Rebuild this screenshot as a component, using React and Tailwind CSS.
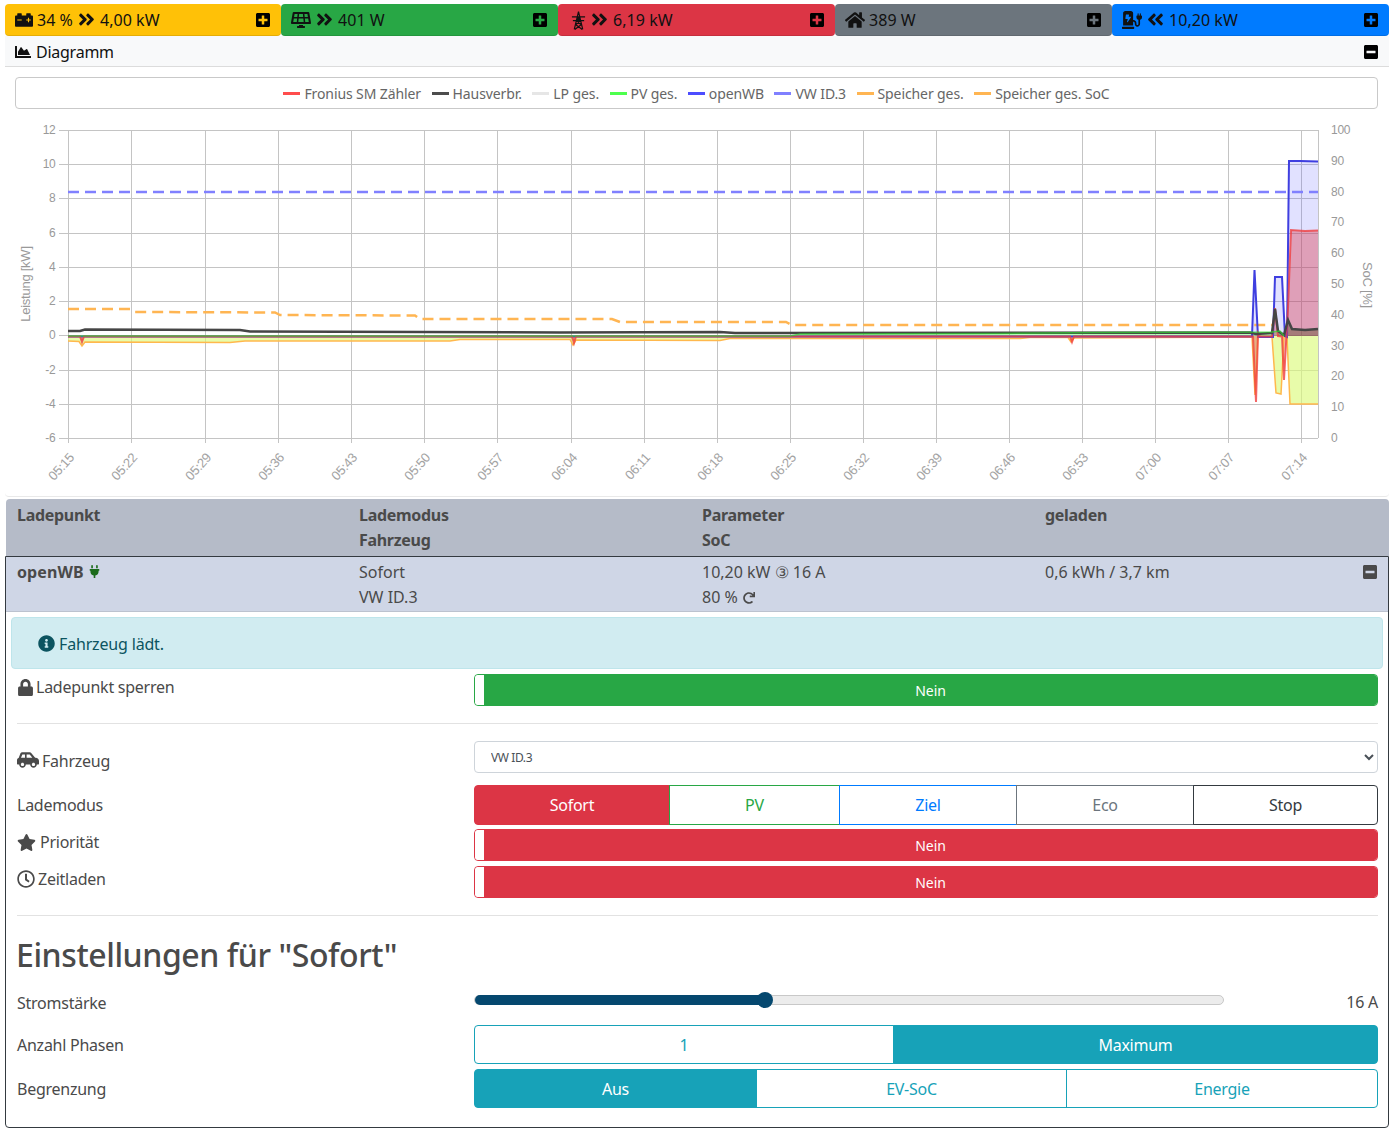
import {
  FaCarBattery, FaAngleDoubleRight, FaAngleDoubleLeft, FaSolarPanel, FaHome, FaChargingStation,
  FaPlusSquare, FaMinusSquare, FaChartArea, FaPlug, FaInfoCircle, FaLock, FaCarSide, FaStar, FaRegClock, FaRedo,
} from "react-icons/fa";

const line = (pts) => pts.map((p) => p.join(",")).join(" ");
const area = (pts) => line([[pts[0][0], 336], ...pts, [pts[pts.length - 1][0], 336]]);

const yLeft = [12, 10, 8, 6, 4, 2, 0, -2, -4, -6];
const yRight = [100, 90, 80, 70, 60, 50, 40, 30, 20, 10, 0];
const xTicks = [
  [68, "05:15"], [131, "05:22"], [205, "05:29"], [278, "05:36"], [351, "05:43"], [424, "05:50"],
  [497, "05:57"], [571, "06:04"], [644, "06:11"], [717, "06:18"], [790, "06:25"], [863, "06:32"],
  [936, "06:39"], [1009, "06:46"], [1082, "06:53"], [1155, "07:00"], [1228, "07:07"], [1301, "07:14"],
];

const openwb = [[68, 336.5], [1252, 336.5], [1254.5, 270], [1258, 337], [1273, 337], [1275, 277], [1282, 277], [1285, 336], [1287, 337], [1289, 161], [1300, 161], [1318, 161.5]];
const zaehler = [[68, 336.5], [80, 336.5], [82, 342], [84, 336.5], [572, 336.5], [574, 343], [576, 336.5], [1070, 336.5], [1072, 342], [1074, 336.5], [1253, 336.5], [1256, 402], [1258, 333], [1260, 336.5], [1272, 336.5], [1275, 308], [1278, 336], [1282, 336.5], [1284, 380], [1288, 308], [1291, 230], [1305, 231], [1318, 230.5]];
const speicher = [[68, 341], [79, 341.5], [82, 346], [85, 342], [230, 342.5], [245, 341], [450, 341], [460, 339.5], [570, 339.5], [573, 345], [576, 340], [720, 340.5], [730, 338.5], [1020, 338.5], [1030, 337.5], [1068, 337.5], [1071, 342], [1074, 338], [1252, 337], [1255, 395], [1258, 337], [1272, 337], [1276, 393], [1281, 394], [1284, 337], [1287, 337], [1290, 404], [1318, 404]];
const haus = [[68, 331], [80, 331], [85, 329.5], [240, 330], [250, 331.5], [560, 332.5], [720, 332], [735, 333], [1250, 332.5], [1256, 334], [1272, 333], [1275, 309], [1278, 331], [1284, 335], [1288, 320], [1292, 329], [1305, 330], [1318, 329]];
const pv = [[68, 336], [790, 336], [800, 334], [1000, 333.5], [1100, 332.5], [1272, 332], [1280, 331], [1284, 336]];
const soc = [[68, 309], [130, 309], [135, 312], [275, 312.5], [280, 315], [415, 315.5], [420, 319], [612, 319], [620, 322], [786, 322], [792, 325], [1272, 325]];

function Chart() {
  return (
    <svg viewBox="5 109 1384 385" className="block w-[1384px] h-[385px]">
      {yLeft.map((v, i) => (
        <g key={v}>
          <line x1="59" x2="1318" y1={Math.round(130 + i * 34.22) + 0.5} y2={Math.round(130 + i * 34.22) + 0.5} stroke="#c4c4c4" />
          <text x="55.5" y={134 + i * 34.22} textAnchor="end" fontSize="12" fill="#999" fontFamily="Liberation Sans">{v}</text>
        </g>
      ))}
      {yRight.map((v, i) => (
        <text key={v} x="1331" y={134 + i * 30.8} fontSize="12" fill="#999" fontFamily="Liberation Sans">{v}</text>
      ))}
      {xTicks.map(([x, t]) => (
        <g key={t}>
          <line x1={x + 0.5} x2={x + 0.5} y1="130" y2="443" stroke="#c4c4c4" />
          <text transform={`translate(${x + 7} 458) rotate(-48)`} textAnchor="end" fontSize="13" fill="#a3a3a3" fontFamily="Liberation Sans">{t}</text>
        </g>
      ))}
      <line x1="1318.5" x2="1318.5" y1="130" y2="438" stroke="#c4c4c4" />
      <text transform="translate(30 284) rotate(-90)" textAnchor="middle" fontSize="13" fill="#999" fontFamily="Liberation Sans">Leistung [kW]</text>
      <text transform="translate(1363 285) rotate(90)" textAnchor="middle" fontSize="13" fill="#999" fontFamily="Liberation Sans">SoC [%]</text>

      <polygon points={area(speicher)} fill="#dcfb7c" fillOpacity="0.65" />
      <polygon points={area(pv)} fill="#4dff4d" fillOpacity="0.4" />
      <polygon points={area(openwb)} fill="#5050ff" fillOpacity="0.17" />
      <polygon points={area(zaehler)} fill="#dc3545" fillOpacity="0.38" />
      <polygon points={area(haus.slice(-6))} fill="#6b5a3a" fillOpacity="0.5" />

      <line x1="68" x2="1318" y1="192" y2="192" stroke="#8080ff" strokeWidth="2.5" strokeDasharray="11 6" />
      <polyline points={line(soc)} fill="none" stroke="#ffb552" strokeWidth="2.5" strokeDasharray="11 6" />
      <polyline points={line(speicher)} fill="none" stroke="#ffb84d" strokeWidth="1.5" />
      <polyline points={line(openwb)} fill="none" stroke="#3f3fe0" strokeWidth="2" />
      <polyline points={line(zaehler)} fill="none" stroke="#f03c3c" strokeWidth="2" strokeOpacity="0.78" />
      <polyline points={line(haus)} fill="none" stroke="#454545" strokeWidth="2.5" />
      <polyline points={line(pv)} fill="none" stroke="#2fd42f" strokeWidth="1.5" strokeOpacity="0.7" />
    </svg>
  );
}

// lattice mast, no matching icon in the packs
function Pylon() {
  return (
    <svg viewBox="0 0 16 20" className="w-[15px] h-5 ml-[3px] mt-[3px]" fill="none" stroke="#111" strokeWidth="1.3">
      <path d="M8 0 L3.5 19 M8 0 L12.5 19 M1 5.5 H15 M2 9.5 H14 M6.5 5.5 L9.8 9.5 M9.5 5.5 L6.2 9.5 M6 9.5 L10.8 14 M10 9.5 L5.2 14 M5.2 14 L12 19 M10.8 14 L4 19" />
    </svg>
  );
}

function Tile({ bg, children }) {
  return (
    <div className={`flex items-center h-8 pl-[10px] pr-[10px] rounded-[4px] text-[16px] tracking-[0.05px] text-[#111] border-b border-black/10 ${bg}`}>
      <div className="flex items-center gap-[4px] flex-1">{children}</div>
      <FaPlusSquare className="text-black text-[16px]" />
    </div>
  );
}

const legend = [
  ["bg-[#ff4d4d]", "Fronius SM Zähler"],
  ["bg-[#4d4d4d]", "Hausverbr."],
  ["bg-[#e6e6e6]", "LP ges."],
  ["bg-[#4dff4d]", "PV ges."],
  ["bg-[#4d4dff]", "openWB"],
  ["bg-[#8080ff]", "VW ID.3"],
  ["bg-[#ffb552]", "Speicher ges."],
  ["bg-[#ffb552]", "Speicher ges. SoC"],
];

function Toggle({ color, border }) {
  return (
    <div className={`flex h-8 rounded-[4px] border overflow-hidden ${border}`}>
      <div className="w-[9px] bg-white rounded-[3px]" />
      <div className={`flex-1 flex items-center justify-center text-white text-[14px] tracking-[-0.1px] ${color}`}>Nein</div>
    </div>
  );
}

function Row({ label, className, children }) {
  return (
    <div className={`grid grid-cols-[457px_904px] ${className}`}>
      {label}
      {children}
    </div>
  );
}

function Seg({ className, children }) {
  return <div className={`flex items-center justify-center border -ml-px first:ml-0 ${className}`}>{children}</div>;
}

export default function App() {
  return (
    <div className="w-[1384px] h-[1139px] ml-[5px] pt-1 bg-white text-[16px] text-[#4a4a4a] font-['Noto_Sans','Open_Sans',sans-serif] tracking-[-0.25px]">
      <div className="grid grid-cols-[276px_277px_277px_277px_277px]">
        <Tile bg="bg-[#ffc107]"><FaCarBattery className="text-[18px]" /><span>34 %</span><FaAngleDoubleRight className="text-[19px]" /><span>4,00 kW</span></Tile>
        <Tile bg="bg-[#28a745]"><FaSolarPanel className="text-[20px]" /><FaAngleDoubleRight className="text-[19px]" /><span>401 W</span></Tile>
        <Tile bg="bg-[#dc3545]"><Pylon /><FaAngleDoubleRight className="text-[19px]" /><span>6,19 kW</span></Tile>
        <Tile bg="bg-[#6c757d]"><FaHome className="text-[20px]" /><span>389 W</span></Tile>
        <Tile bg="bg-[#007bff]"><FaChargingStation className="text-[20px]" /><FaAngleDoubleLeft className="text-[19px]" /><span>10,20 kW</span></Tile>
      </div>

      <div className="h-[461px] rounded-b-[4px] border-b border-[#e9e9e9]">
        <div className="flex items-center justify-between h-[31px] pt-px pl-[10px] pr-[10px] bg-[#f8f9fa] border-b border-[#dcdcdc] text-[#111]">
          <div className="flex items-center gap-[5px]"><FaChartArea className="text-[16px]" /><span>Diagramm</span></div>
          <FaMinusSquare className="text-black text-[16px]" />
        </div>
        <div className="flex items-center justify-center gap-[10.5px] h-8 mt-[10px] ml-[10px] mr-[11px] rounded-[4px] border border-[#c9c9c9] text-[14px] tracking-[-0.1px] text-[#666]">
          {legend.map(([c, t]) => (
            <div key={t} className="flex items-center gap-[4px]">
              <span className={`w-[17px] h-[3px] ${c}`} />
              <span>{t}</span>
            </div>
          ))}
        </div>
        <Chart />
      </div>

      <div className="grid grid-cols-[353px_343px_343px_343px] h-[57px] mt-[2px] ml-px pl-[11px] rounded-t-[4px] bg-[#b5bbc8] font-bold tracking-[-0.3px] leading-[25px] pt-1">
        <div>Ladepunkt</div>
        <div className="ml-[-11px]">Lademodus<br />Fahrzeug</div>
        <div className="ml-[-11px]">Parameter<br />SoC</div>
        <div className="ml-[-11px]">geladen</div>
      </div>

      <div className="h-[572px] rounded-b-[4px] border border-[#343a40]">
        <div className="relative grid grid-cols-[353px_343px_343px_342px] h-[55px] pl-[11px] pt-[3px] bg-[#cfd6e6] border-b border-[#bcc2cf] leading-[25px] tracking-normal">
          <div className="flex items-start font-bold tracking-[0.1px]">openWB<FaPlug className="text-[#1b6b1b] text-[13px] mt-[5px] ml-[4px]" /></div>
          <div className="ml-[-11px]">Sofort<br />VW ID.3</div>
          <div className="ml-[-11px]">
            <div>10,20 kW <span className="text-[16px]">③</span> 16 A</div>
            <div className="flex items-center gap-[5px]">80 % <FaRedo className="text-[12px]" /></div>
          </div>
          <div className="ml-[-11px]">0,6 kWh / 3,7 km</div>
          <FaMinusSquare className="absolute right-[10px] top-[7px] text-[16px] text-[#4a4a4a]" />
        </div>

        <div className="flex items-center h-[52px] pt-px mt-[5px] ml-[5px] mr-[5px] pl-[26px] rounded-[4px] bg-[#d1ecf1] border border-[#bee5eb] text-[#0c5460] tracking-[-0.17px]">
          <FaInfoCircle className="text-[17px] mr-[4px]" />
          <span>Fahrzeug lädt.</span>
        </div>

        <div className="pl-[11px] pr-[10px]">
          <Row className="mt-[5px]" label={<div className="flex items-center gap-[2px] h-[26px]"><FaLock className="text-[17px]" /><span>Ladepunkt sperren</span></div>}>
            <Toggle color="bg-[#28a745]" border="border-[#28a745]" />
          </Row>
          <hr className="mt-[17px] border-[#e2e2e2]" />
          <Row className="mt-[17px]" label={<div className="flex items-end gap-[3px] h-[32px]"><FaCarSide className="text-[22px] mb-[2px]" /><span>Fahrzeug</span></div>}>
            <select className="h-8 pl-[12px] rounded-[4px] border border-[#ced4da] bg-white text-[12px] tracking-[-0.4px] text-[#495057]">
              <option>VW ID.3</option>
            </select>
          </Row>
          <Row className="mt-3" label={<div className="flex items-center h-10">Lademodus</div>}>
            <div className="grid grid-cols-[196px_170px_177px_177px_184px] h-10">
              <Seg className="border-[#dc3545] bg-[#dc3545] text-white rounded-l-[4px]">Sofort</Seg>
              <Seg className="border-[#28a745] text-[#28a745]">PV</Seg>
              <Seg className="border-[#007bff] text-[#007bff]">Ziel</Seg>
              <Seg className="border-[#6c757d] text-[#6c757d]">Eco</Seg>
              <Seg className="border-[#343a40] text-[#343a40] rounded-r-[4px]">Stop</Seg>
            </div>
          </Row>
          <Row className="mt-1" label={<div className="flex items-center gap-[4px] h-[26px]"><FaStar className="text-[19px]" /><span>Priorität</span></div>}>
            <Toggle color="bg-[#dc3545]" border="border-[#dc3545]" />
          </Row>
          <Row className="mt-[5px]" label={<div className="flex items-center gap-[3px] h-[26px]"><FaRegClock className="text-[18px]" /><span>Zeitladen</span></div>}>
            <Toggle color="bg-[#dc3545]" border="border-[#dc3545]" />
          </Row>
          <hr className="mt-[17px] border-[#e2e2e2]" />
          <h2 className="mt-[17px] -ml-px text-[32px] leading-[44px] font-medium tracking-[-0.42px]">Einstellungen für "Sofort"</h2>
          <Row className="mt-[11px]" label={<div className="flex items-center h-[30px]">Stromstärke</div>}>
            <div className="flex items-center h-[24px]">
              <div className="flex items-center flex-1 mr-[120px] h-[10px] rounded-full bg-[#ececec] border border-[#c8c8c8]">
                <div className="w-[290px] h-[10px] rounded-full bg-[#05486f]" />
                <div className="w-4 h-4 -ml-[8px] rounded-full bg-[#05486f]" />
              </div>
              <span className="w-[34px] ml-auto mt-1 text-right whitespace-nowrap">16 A</span>
            </div>
          </Row>
          <Row className="mt-[7px]" label={<div className="flex items-center h-[39px]">Anzahl Phasen</div>}>
            <div className="grid grid-cols-[420px_484px] h-[39px]">
              <Seg className="border-[#17a2b8] text-[#17a2b8] rounded-l-[4px]">1</Seg>
              <Seg className="border-[#17a2b8] bg-[#17a2b8] text-white rounded-r-[4px]">Maximum</Seg>
            </div>
          </Row>
          <Row className="mt-[5px]" label={<div className="flex items-center h-[39px]">Begrenzung</div>}>
            <div className="grid grid-cols-[283px_310px_311px] h-[39px]">
              <Seg className="border-[#17a2b8] bg-[#17a2b8] text-white rounded-l-[4px]">Aus</Seg>
              <Seg className="border-[#17a2b8] text-[#17a2b8]">EV-SoC</Seg>
              <Seg className="border-[#17a2b8] text-[#17a2b8] rounded-r-[4px]">Energie</Seg>
            </div>
          </Row>
        </div>
      </div>
    </div>
  );
}
